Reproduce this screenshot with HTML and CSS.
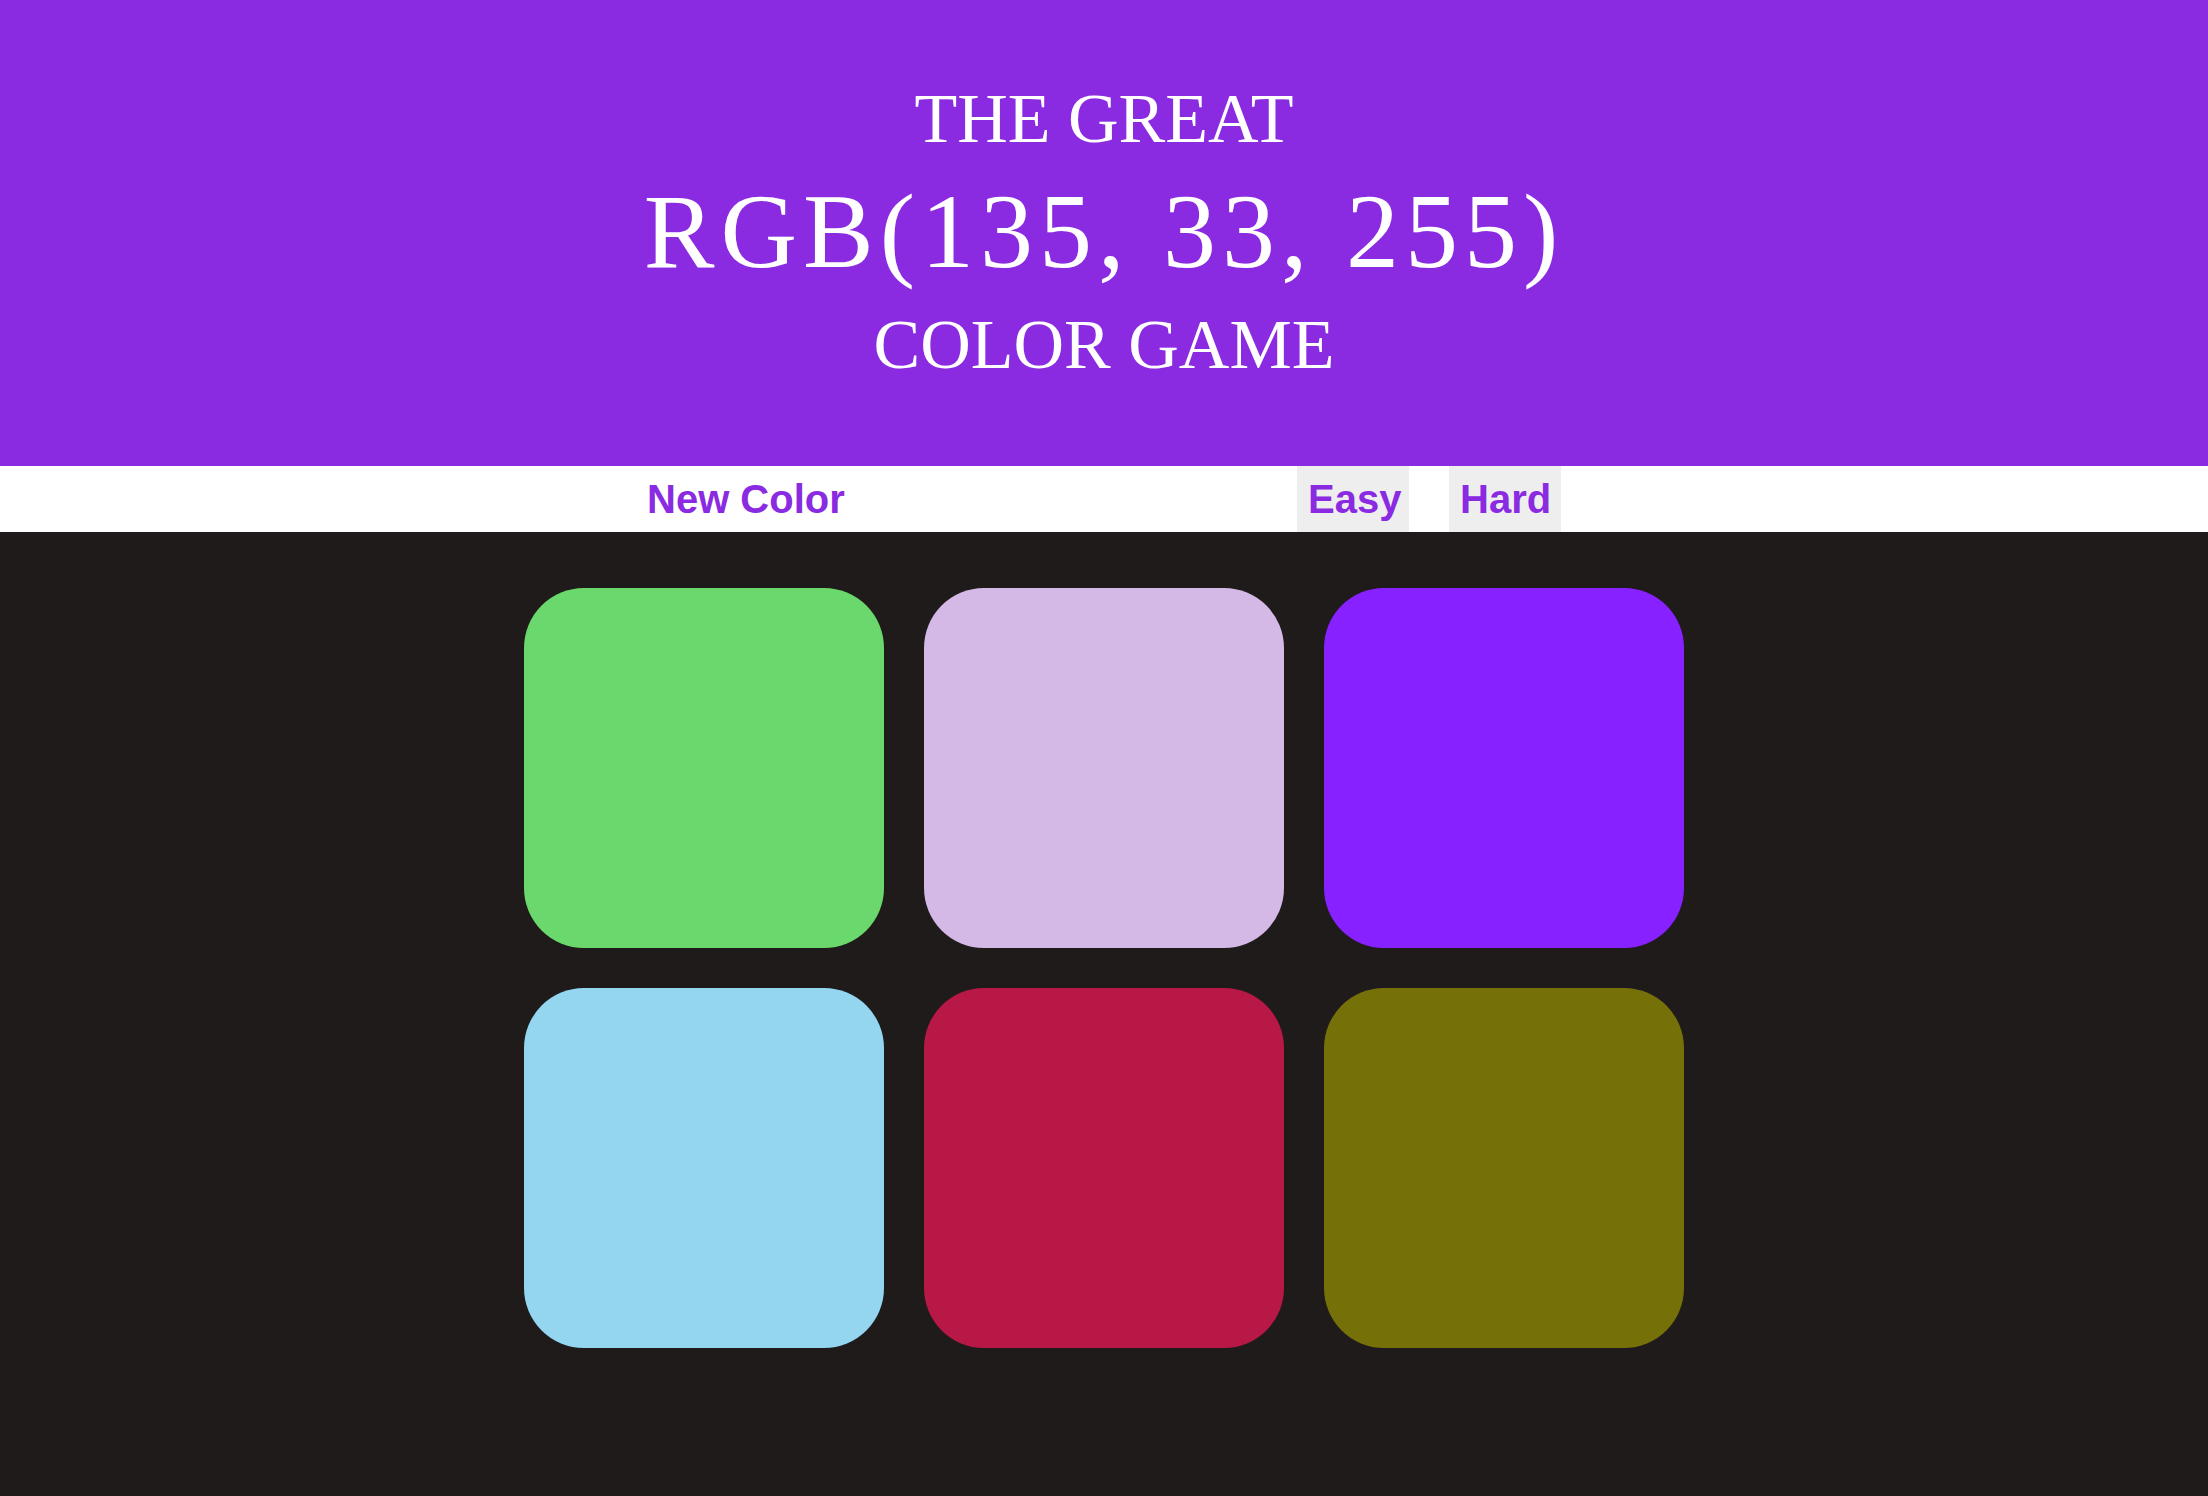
FILE: index.html
```html
<!DOCTYPE html>
<html>
<head>
<meta charset="utf-8">
<title>Color Game</title>
<link rel="stylesheet" href="styles.css">
</head>
<body>
<header class="banner">
  <div class="line-small">THE GREAT</div>
  <div class="line-big">RGB(135, 33, 255)</div>
  <div class="line-small">COLOR GAME</div>
</header>
<nav class="stripe">
  <div class="stripe-inner">
    <button class="btn btn-plain">New Color</button>
    <div class="modes">
      <button class="btn btn-mode">Easy</button>
      <button class="btn btn-mode">Hard</button>
    </div>
  </div>
</nav>
<main class="board">
  <div class="square sq-green"></div>
  <div class="square sq-lilac"></div>
  <div class="square sq-purple"></div>
  <div class="square sq-blue"></div>
  <div class="square sq-crimson"></div>
  <div class="square sq-olive"></div>
</main>
</body>
</html>
```
FILE: styles.css
```css
html, body {
  margin: 0;
  padding: 0;
}
body {
  background: #201b1b;
  min-height: 1496px;
  font-family: "Liberation Sans", Arial, sans-serif;
}
.banner {
  background: #8a2be2;
  color: #ffffff;
  text-align: center;
  font-family: "Liberation Serif", "Times New Roman", serif;
  font-weight: normal;
  padding: 77px 0 79px;
}
.line-small {
  font-size: 70px;
  line-height: 84px;
}
.line-big {
  font-size: 106px;
  letter-spacing: 6px;
  line-height: 142px;
}
.stripe {
  background: #ffffff;
  height: 66px;
}
.stripe-inner {
  width: 914px;
  margin: 0 auto;
  height: 66px;
  display: flex;
  align-items: stretch;
  justify-content: space-between;
}
.modes {
  display: flex;
  gap: 40px;
}
.btn {
  border: none;
  margin: 0;
  font-family: "Liberation Sans", Arial, sans-serif;
  font-weight: bold;
  font-size: 40px;
  line-height: 66px;
  height: 66px;
  color: #8a2be2;
  cursor: pointer;
}
.btn-plain {
  background: transparent;
  padding: 0;
}
.btn-mode {
  background: #eeeeee;
  padding: 0 11px;
  width: 112px;
}
.board {
  width: 1160px;
  margin: 56px auto 0;
  display: grid;
  grid-template-columns: repeat(3, 360px);
  gap: 40px;
}
.square {
  width: 360px;
  height: 360px;
  border-radius: 60px;
}
.sq-green { background: #6ad86d; }
.sq-lilac { background: #d4b8e6; }
.sq-purple { background: #8721ff; }
.sq-blue { background: #94d5ef; }
.sq-crimson { background: #b81846; }
.sq-olive { background: #757008; }
```
